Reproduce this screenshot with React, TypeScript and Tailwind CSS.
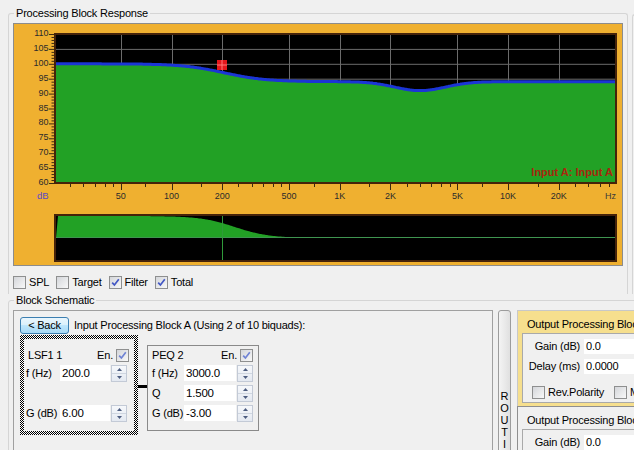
import React from 'react';

// frequency / level mapping for the response plot (page pixels)
const f2x = (f: number) => 171.5 + 168.3 * Math.log10(f / 100);
const x2f = (x: number) => 100 * Math.pow(10, (x - 171.5) / 168.3);
const db2y = (db: number) => 34 + (110 - db) * 2.98;

function response(f: number) {
  const shelf = 6 / (1 + Math.pow(f / 205, 3.5));
  const oct = Math.log2(f / 3000);
  const peq = -3 * Math.exp(-(oct * oct) / (2 * 0.5 * 0.5));
  return 94 + shelf + peq;
}

const curve: string[] = [];
for (let x = 55; x <= 616; x++) curve.push(`${x} ${db2y(response(x2f(x))).toFixed(1)}`);
const linePath = 'M' + curve.join(' L');
const fillPath = 'M55 183 L' + curve.join(' L') + ' L616 183 Z';

const ov: string[] = [];
for (let x = 58; x <= 616; x++) {
  const frac = 1 / (1 + Math.pow(x2f(x) / 238, 4.3));
  ov.push(`${x} ${(238 - 22 * frac).toFixed(1)}`);
}
const ovPath = 'M56 238 L' + ov.join(' L') + ' L616 238 Z';

const major: [number, string][] = [
  [50, '50'], [100, '100'], [200, '200'], [500, '500'], [1000, '1K'],
  [2000, '2K'], [5000, '5K'], [10000, '10K'], [20000, '20K'],
];
const minor = [25, 30, 35, 40, 45, 70, 150, 250, 300, 350, 400, 450, 700, 1500, 2500, 3000, 3500, 4000, 4500, 7000, 15000, 25000, 30000, 35000, 40000];
const dbs = [110, 105, 100, 95, 90, 85, 80, 75, 70, 65, 60];

function Chart() {
  const dbTicks: number[] = [];
  for (let d = 60; d <= 110; d++) dbTicks.push(d);
  return (
    <svg width="608" height="241" viewBox="14 24 608 241" className="block tracking-normal">
      <rect x="55" y="34" width="561" height="149" fill="#000" />
      {dbs.slice(1, -1).map((d) => (
        <line key={d} x1="56" x2="615" y1={db2y(d) + 0.5} y2={db2y(d) + 0.5} stroke="#6c6c6c" />
      ))}
      {major.map(([f]) => (
        <line key={f} x1={Math.round(f2x(f)) + 0.5} x2={Math.round(f2x(f)) + 0.5} y1="35" y2="182" stroke="#6c6c6c" />
      ))}
      <path d={fillPath} fill="#22a125" />
      <path d={linePath} stroke="#1b35d6" strokeWidth="3" fill="none" />
      <rect x="55" y="34" width="561" height="149" fill="none" stroke="#45230a" strokeWidth="2" />

      <rect x="217" y="60" width="10" height="10" fill="#e4171c" />
      <line x1="222" x2="222" y1="60" y2="70" stroke="#ff7a7a" />
      <line x1="217" x2="227" y1="65" y2="65" stroke="#ff7a7a" />

      <text x="613" y="176" textAnchor="end" fontSize="11" fontWeight="bold" fill="#a8270f">Input A: Input A</text>

      {dbTicks.map((d) => (
        <line key={d} x1={d % 5 === 0 ? 49 : 51.5} x2="54" y1={db2y(d) + 0.5} y2={db2y(d) + 0.5} stroke="#3a2a10" />
      ))}
      {dbs.map((d) => (
        <text key={d} x="48.5" y={db2y(d) + 2} textAnchor="end" fontSize="9" fill="#2b2b2b">{d}</text>
      ))}

      {major.map(([f]) => (
        <line key={f} x1={Math.round(f2x(f)) + 0.5} x2={Math.round(f2x(f)) + 0.5} y1="184" y2="190" stroke="#3a2a10" />
      ))}
      {minor.map((f) => (
        <line key={f} x1={Math.round(f2x(f)) + 0.5} x2={Math.round(f2x(f)) + 0.5} y1="184" y2="187" stroke="#3a2a10" />
      ))}
      {major.map(([f, l]) => (
        <text key={l} x={f2x(f)} y="199" textAnchor="middle" fontSize="9" fill="#2b2b2b">{l}</text>
      ))}
      <text x="37" y="199" fontSize="9.5" fill="#5a48c8">dB</text>
      <text x="616" y="199" textAnchor="end" fontSize="9" fill="#3a3a3a">Hz</text>

      <rect x="55" y="215" width="561" height="46" fill="#000" />
      <path d={ovPath} fill="#22a125" />
      <line x1="56" x2="615" y1="237.5" y2="237.5" stroke="#3f9450" />
      <line x1="222.5" x2="222.5" y1="216" y2="260" stroke="#2f9a3a" />
      <rect x="55" y="215" width="561" height="46" fill="none" stroke="#45230a" strokeWidth="2" />
    </svg>
  );
}

function Check({ on, dim }: { on?: boolean; dim?: boolean }) {
  return (
    <span className="inline-flex w-[13px] h-[13px] shrink-0 items-center justify-center border border-[#8e8f8f] bg-[linear-gradient(135deg,#d4d6da,#f8f8f8)]">
      {on && (
        <svg width="9" height="9" viewBox="0 0 9 9">
          <path d="M1.2 4.6 L3.4 7 L7.8 1.2" stroke={dim ? '#6f83d4' : '#4257c4'} strokeWidth="1.7" fill="none" />
        </svg>
      )}
    </span>
  );
}

function Spin() {
  return (
    <div className="ml-[1px] flex h-[17px] w-[16px] shrink-0 flex-col border border-[#c3cad6] bg-[linear-gradient(#f6f8fb,#e4e9f1)]">
      <div className="flex flex-1 items-center justify-center border-b border-[#cfd6e0]">
        <svg width="5" height="3" viewBox="0 0 5 3">
          <path d="M0 3 L2.5 0 L5 3Z" fill="#4d5d80" />
        </svg>
      </div>
      <div className="flex flex-1 items-center justify-center">
        <svg width="5" height="3" viewBox="0 0 5 3">
          <path d="M0 0 L5 0 L2.5 3Z" fill="#4d5d80" />
        </svg>
      </div>
    </div>
  );
}

function LsfRow({ label, value }: { label: string; value: string }) {
  return (
    <div className="flex h-[20px] items-center">
      <span className="w-[34px]">{label}</span>
      <div className="h-[16px] w-[50px] bg-white pl-[2px] text-[11.5px] leading-[16px]">{value}</div>
      <Spin />
    </div>
  );
}

function PeqRow({ label, value }: { label: string; value: string }) {
  return (
    <div className="flex h-[20px] items-center">
      <span className="w-[32px]">{label}</span>
      <div className="h-[16px] w-[52px] bg-white pl-[2px] text-[11.5px] leading-[16px]">{value}</div>
      <Spin />
    </div>
  );
}

function OutPanel({ active, title }: { active?: boolean; title: string }) {
  return (
    <div
      className={
        active
          ? 'h-[96px] border-l border-t border-[#c8c8c8] bg-[#f6df8e] pl-[4px]'
          : 'h-[96px] border-l border-t border-[#8f8f8f] pl-[4px]'
      }
    >
      <div className="h-[22px] whitespace-nowrap pl-[5px] pt-[7px]">{title}</div>
      <div className="h-[70px] border border-[#a9a9a9] bg-[#f0f0f0] pt-[2px]">
        <div className="flex h-[20px] items-center">
          <span className="w-[57px] text-right">Gain (dB)</span>
          <div className="ml-[4px] h-[15px] flex-1 bg-white pl-[2px] leading-[15px]">0.0</div>
        </div>
        <div className="flex h-[20px] items-center">
          <span className="w-[57px] text-right">Delay (ms)</span>
          <div className="ml-[4px] h-[15px] flex-1 bg-white pl-[2px] leading-[15px]">0.0000</div>
        </div>
        <div className="mt-[6px] flex h-[20px] items-center pl-[9px] whitespace-nowrap">
          <Check />
          <span className="ml-[3px]">Rev.Polarity</span>
          <span className="ml-[10px] flex"><Check /></span>
          <span className="ml-[3px]">Mute</span>
        </div>
      </div>
    </div>
  );
}

export default function App() {
  return (
    <div className="h-[450px] w-[634px] overflow-hidden bg-[#f0f0f0] pl-[8px] pt-[7px] font-['Liberation_Sans',Arial,sans-serif] text-[11px] leading-[13px] tracking-[-0.2px] text-black">
      <div className="flex">
        <fieldset className="w-[620px] shrink-0 rounded-t-[3px] border border-b-0 border-[#d5d5d5] pb-[2px]">
          <legend className="ml-[5px] px-[2px]">Processing Block Response</legend>
          <div className="ml-[4px] mt-[3px] h-[243px] w-[610px] border border-[#8c8c8c] bg-[#efb030]">
            <Chart />
          </div>
          <div className="ml-[4px] mt-[10px] flex h-[13px] items-center">
            <Check />
            <span className="ml-[3px] mr-[7px]">SPL</span>
            <Check />
            <span className="ml-[3px] mr-[7px]">Target</span>
            <Check on />
            <span className="ml-[3px] mr-[7px]">Filter</span>
            <Check on />
            <span className="ml-[3px]">Total</span>
          </div>
        </fieldset>
        <div className="ml-[4px] mt-[7px] h-[280px] w-[10px] shrink-0 rounded-tl-[3px] border-l border-t border-[#d5d5d5]" />
      </div>

      <fieldset className="h-[170px] w-[640px] rounded-t-[3px] border border-[#d5d5d5]">
        <legend className="ml-[5px] px-[2px]">Block Schematic</legend>
        <div className="ml-[4px] mt-[3px] flex items-start">
          <div className="h-[160px] w-[480px] shrink-0 border border-[#a0a0a0] pl-[6px] pt-[6px]">
            <div className="flex h-[17px] items-center">
              <button className="flex h-[17px] w-[49px] items-center justify-center rounded-[3px] border border-[#3c7fb1] bg-[linear-gradient(#eaf6fd,#d9f0fc_50%,#bee6fd_50%,#a7d9f5)] text-[11px] leading-[13px]">
                &lt; Back
              </button>
              <span className="ml-[5px]">Input Processing Block A (Using 2 of 10 biquads):</span>
            </div>
            <div className="mt-[1px] flex items-start">
              <div className="h-[100px] w-[118px] bg-[image:repeating-conic-gradient(#000_0_25%,#fff_0_50%)] bg-[length:2px_2px] p-[4px]">
                <div className="h-full bg-[#f0f0f0] pl-[2px] pr-[5px] pt-[8px]">
                  <div className="flex h-[16px] items-center">
                    <span className="pl-[2px]">LSF1 1</span>
                    <span className="ml-auto">En.</span>
                    <span className="ml-[3px] flex"><Check on dim /></span>
                  </div>
                  <LsfRow label="f (Hz)" value="200.0" />
                  <div className="h-[20px]" />
                  <LsfRow label="G (dB)" value="6.00" />
                </div>
              </div>
              <div className="mt-[50px] h-[3px] w-[9px] bg-black" />
              <div className="mt-[10px] h-[86px] w-[112px] border border-[#8a8a8a] pl-[4px] pr-[5px] pt-[1px]">
                <div className="flex h-[16px] items-center">
                  <span>PEQ 2</span>
                  <span className="ml-auto">En.</span>
                  <span className="ml-[3px] flex"><Check on dim /></span>
                </div>
                <PeqRow label="f (Hz)" value="3000.0" />
                <PeqRow label="Q" value="1.500" />
                <PeqRow label="G (dB)" value="-3.00" />
              </div>
            </div>
          </div>

          <div className="ml-[5px] flex h-[160px] w-[13px] shrink-0 flex-col items-center rounded-t-[3px] border border-[#9c9c9c] bg-[linear-gradient(90deg,#f4f4f4,#e0e0e0)] pt-[79px] tracking-normal">
            {'ROUTING'.split('').map((c, i) => (
              <span key={i} className="h-[12px] leading-[12px]">{c}</span>
            ))}
          </div>

          <div className="ml-[6px] flex w-[200px] shrink-0 flex-col">
            <OutPanel active title="Output Processing Block A" />
            <OutPanel title="Output Processing Block B" />
          </div>
        </div>
      </fieldset>
    </div>
  );
}
